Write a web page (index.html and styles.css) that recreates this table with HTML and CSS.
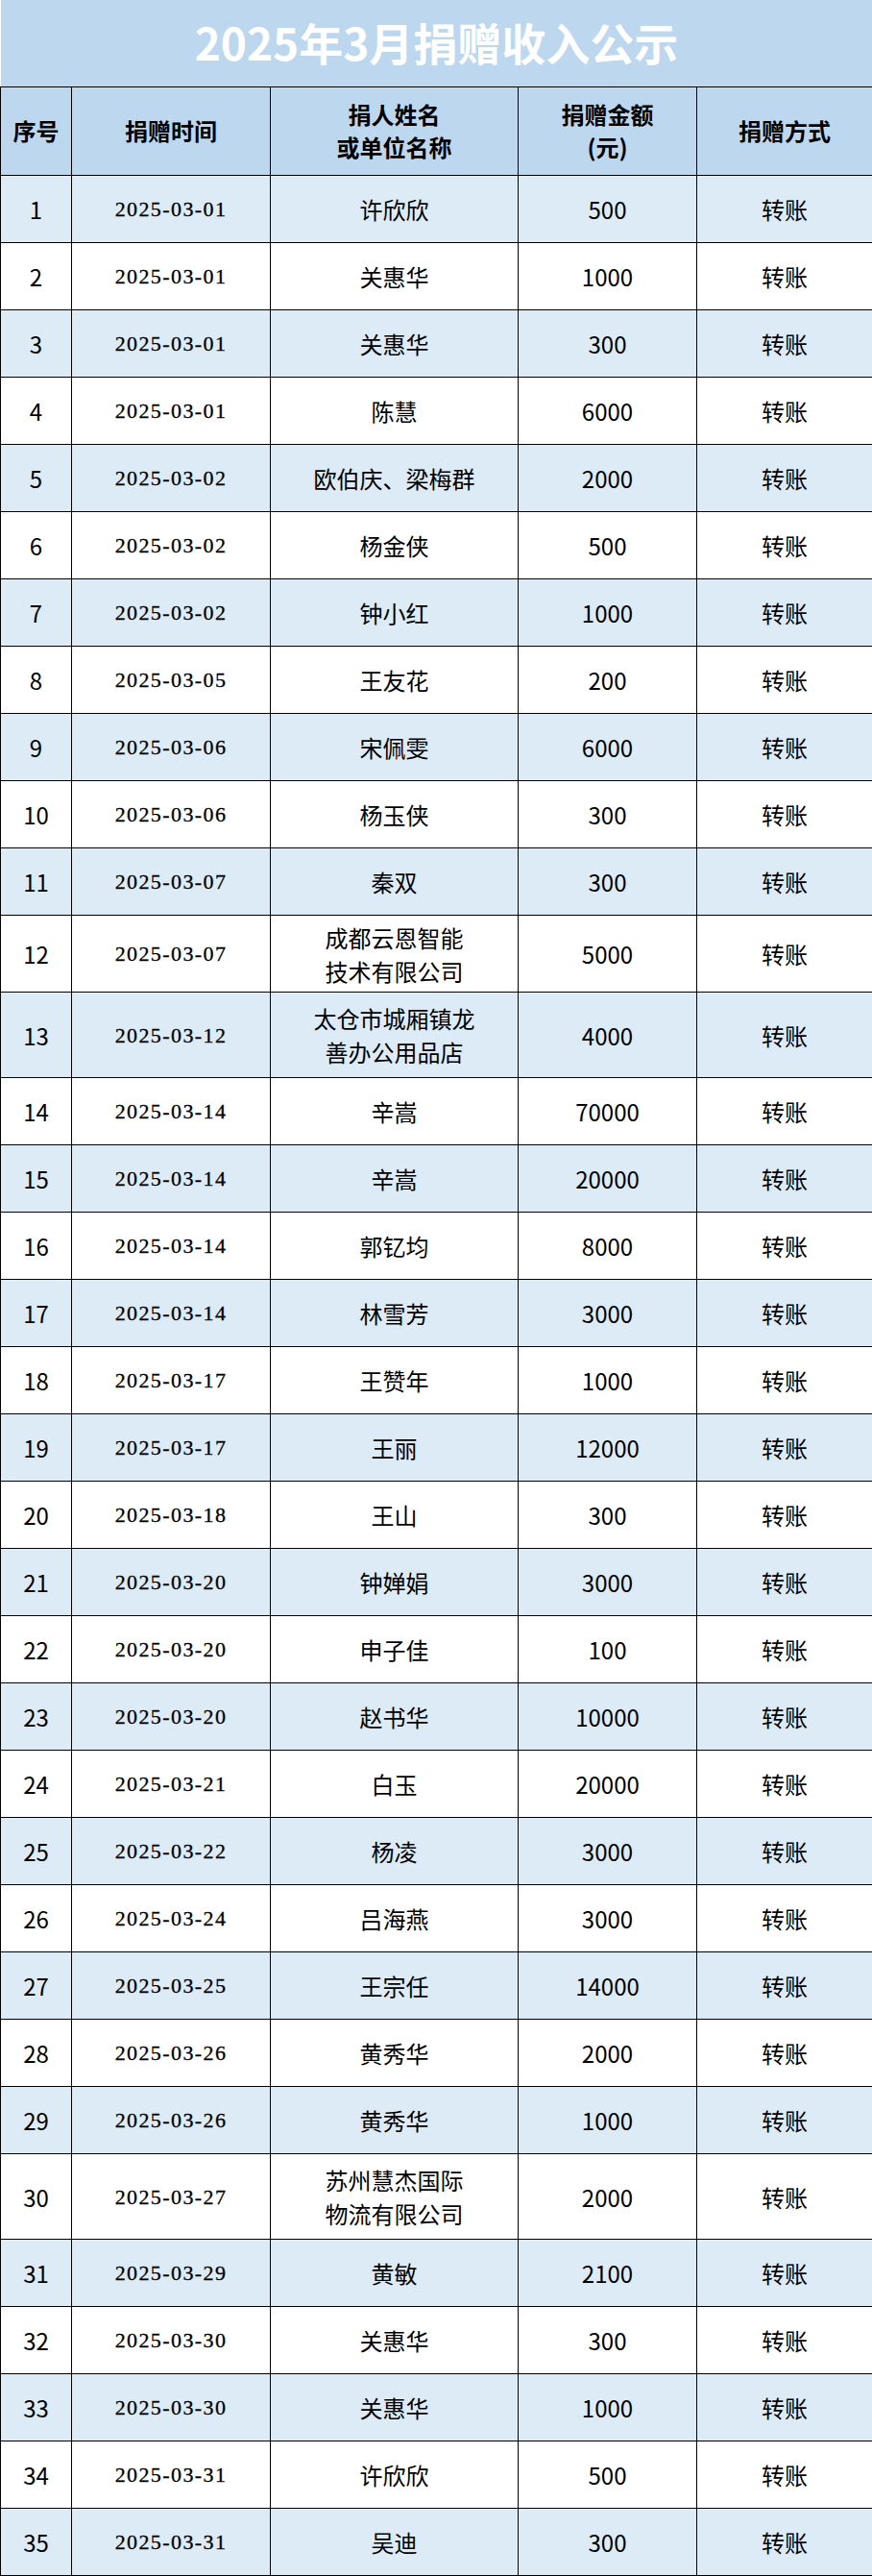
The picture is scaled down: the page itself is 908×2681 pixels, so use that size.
FILE: index.html
```html
<!DOCTYPE html>
<html lang="zh-CN">
<head>
<meta charset="utf-8">
<title>2025年3月捐赠收入公示</title>
<link rel="stylesheet" href="styles.css">
</head>
<body>
<div class="page">
  <div class="title">2025年3月捐赠收入公示</div>
  <table class="tbl">
    <colgroup>
      <col class="c1"><col class="c2"><col class="c3"><col class="c4"><col class="c5">
    </colgroup>
    <thead>
      <tr class="head">
        <th>序号</th>
        <th>捐赠时间</th>
        <th>捐人姓名<br>或单位名称</th>
        <th>捐赠金额<br>(元)</th>
        <th>捐赠方式</th>
      </tr>
    </thead>
    <tbody>
      <tr class="odd"><td>1</td><td class="date">2025-03-01</td><td>许欣欣</td><td>500</td><td>转账</td></tr>
      <tr><td>2</td><td class="date">2025-03-01</td><td>关惠华</td><td>1000</td><td>转账</td></tr>
      <tr class="odd"><td>3</td><td class="date">2025-03-01</td><td>关惠华</td><td>300</td><td>转账</td></tr>
      <tr><td>4</td><td class="date">2025-03-01</td><td>陈慧</td><td>6000</td><td>转账</td></tr>
      <tr class="odd"><td>5</td><td class="date">2025-03-02</td><td>欧伯庆、梁梅群</td><td>2000</td><td>转账</td></tr>
      <tr><td>6</td><td class="date">2025-03-02</td><td>杨金侠</td><td>500</td><td>转账</td></tr>
      <tr class="odd"><td>7</td><td class="date">2025-03-02</td><td>钟小红</td><td>1000</td><td>转账</td></tr>
      <tr><td>8</td><td class="date">2025-03-05</td><td>王友花</td><td>200</td><td>转账</td></tr>
      <tr class="odd"><td>9</td><td class="date">2025-03-06</td><td>宋佩雯</td><td>6000</td><td>转账</td></tr>
      <tr><td>10</td><td class="date">2025-03-06</td><td>杨玉侠</td><td>300</td><td>转账</td></tr>
      <tr class="odd"><td>11</td><td class="date">2025-03-07</td><td>秦双</td><td>300</td><td>转账</td></tr>
      <tr class="tall12"><td>12</td><td class="date">2025-03-07</td><td>成都云恩智能<br>技术有限公司</td><td>5000</td><td>转账</td></tr>
      <tr class="odd tall"><td>13</td><td class="date">2025-03-12</td><td>太仓市城厢镇龙<br>善办公用品店</td><td>4000</td><td>转账</td></tr>
      <tr><td>14</td><td class="date">2025-03-14</td><td>辛嵩</td><td>70000</td><td>转账</td></tr>
      <tr class="odd"><td>15</td><td class="date">2025-03-14</td><td>辛嵩</td><td>20000</td><td>转账</td></tr>
      <tr><td>16</td><td class="date">2025-03-14</td><td>郭钇均</td><td>8000</td><td>转账</td></tr>
      <tr class="odd"><td>17</td><td class="date">2025-03-14</td><td>林雪芳</td><td>3000</td><td>转账</td></tr>
      <tr><td>18</td><td class="date">2025-03-17</td><td>王赞年</td><td>1000</td><td>转账</td></tr>
      <tr class="odd"><td>19</td><td class="date">2025-03-17</td><td>王丽</td><td>12000</td><td>转账</td></tr>
      <tr><td>20</td><td class="date">2025-03-18</td><td>王山</td><td>300</td><td>转账</td></tr>
      <tr class="odd"><td>21</td><td class="date">2025-03-20</td><td>钟婵娟</td><td>3000</td><td>转账</td></tr>
      <tr><td>22</td><td class="date">2025-03-20</td><td>申子佳</td><td>100</td><td>转账</td></tr>
      <tr class="odd"><td>23</td><td class="date">2025-03-20</td><td>赵书华</td><td>10000</td><td>转账</td></tr>
      <tr><td>24</td><td class="date">2025-03-21</td><td>白玉</td><td>20000</td><td>转账</td></tr>
      <tr class="odd"><td>25</td><td class="date">2025-03-22</td><td>杨凌</td><td>3000</td><td>转账</td></tr>
      <tr><td>26</td><td class="date">2025-03-24</td><td>吕海燕</td><td>3000</td><td>转账</td></tr>
      <tr class="odd"><td>27</td><td class="date">2025-03-25</td><td>王宗任</td><td>14000</td><td>转账</td></tr>
      <tr><td>28</td><td class="date">2025-03-26</td><td>黄秀华</td><td>2000</td><td>转账</td></tr>
      <tr class="odd"><td>29</td><td class="date">2025-03-26</td><td>黄秀华</td><td>1000</td><td>转账</td></tr>
      <tr class="tall"><td>30</td><td class="date">2025-03-27</td><td>苏州慧杰国际<br>物流有限公司</td><td>2000</td><td>转账</td></tr>
      <tr class="odd"><td>31</td><td class="date">2025-03-29</td><td>黄敏</td><td>2100</td><td>转账</td></tr>
      <tr><td>32</td><td class="date">2025-03-30</td><td>关惠华</td><td>300</td><td>转账</td></tr>
      <tr class="odd"><td>33</td><td class="date">2025-03-30</td><td>关惠华</td><td>1000</td><td>转账</td></tr>
      <tr><td>34</td><td class="date">2025-03-31</td><td>许欣欣</td><td>500</td><td>转账</td></tr>
      <tr class="odd"><td>35</td><td class="date">2025-03-31</td><td>吴迪</td><td>300</td><td>转账</td></tr>
    </tbody>
  </table>
</div>
</body>
</html>
```

FILE: styles.css
```css
html, body {
  margin: 0;
  padding: 0;
  background: #ffffff;
}

.page {
  width: 908px;
  font-family: "Noto Sans CJK SC", "Noto Sans", sans-serif;
  color: #000;
}

.title {
  height: 90px;
  margin-left: 1px;
  background: #BDD7EE;
  color: #ffffff;
  font-size: 46px;
  font-weight: 700;
  display: flex;
  align-items: center;
  justify-content: center;
  line-height: 1;
  padding-bottom: 4px;
  box-sizing: border-box;
}

.tbl {
  width: 908px;
  table-layout: fixed;
  border-collapse: separate;
  border-spacing: 0;
  border-bottom: 1px solid #000;
}

.c1 { width: 74px; }
.c2 { width: 207px; }
.c3 { width: 258px; }
.c4 { width: 186px; }
.c5 { width: 183px; }

.tbl th,
.tbl td {
  border-top: 1px solid #000;
  border-left: 1px solid #000;
  padding: 0;
  text-align: center;
  vertical-align: middle;
  font-size: 24px;
  line-height: 35px;
}

.tbl tr > :last-child {
  border-right: none;
}

.head {
  height: 92px;
  background: #BDD7EE;
}

.head th {
  font-weight: 700;
  line-height: 34px;
  padding-bottom: 2px;
}

.tbl tbody tr {
  height: 70px;
  background: #ffffff;
}

.tbl tbody tr.odd {
  background: #DDEBF7;
}

.tbl tbody tr.tall12 {
  height: 80px;
}

.tbl tbody tr.tall {
  height: 89px;
}

.tbl td.date {
  font-family: "Liberation Serif", "Times New Roman", serif;
  font-size: 22px;
  letter-spacing: 1.4px;
  -webkit-text-stroke: 0.3px #000;
}
```
